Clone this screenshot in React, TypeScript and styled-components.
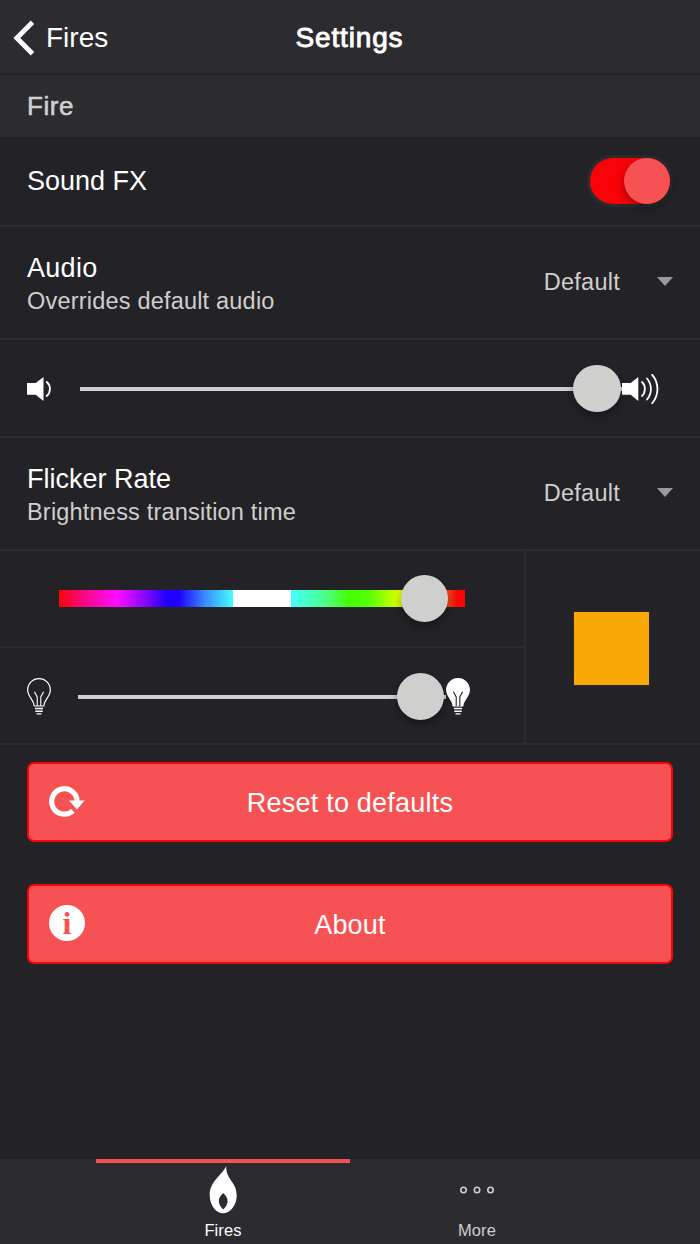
import React from "react";
import styled, { createGlobalStyle } from "styled-components";

const color = {
  page: "#232227",
  panel: "#2c2b30",
  line: "#2c2b30",
  text: "#fff",
  muted: "#cfcfcd",
  knob: "#cfcfcd",
  accent: "#f75253",
  accentStrong: "#f80308",
};

const GlobalStyle = createGlobalStyle`
  * { box-sizing: border-box; }
  body {
    margin: 0;
    background: ${color.page};
    color: ${color.text};
    font-family: "Liberation Sans", Arial, sans-serif;
  }
`;

const Screen = styled.div`
  display: flex;
  flex-direction: column;
  width: 700px;
  height: 1244px;
  background: ${color.page};
`;

const Header = styled.header`
  display: grid;
  grid-template-columns: 1fr auto 1fr;
  align-items: center;
  height: 75px;
  padding: 2px 14px 0 13px;
  background: ${color.panel};
  border-bottom: 2px solid #242328;
`;

const BackLink = styled.a`
  display: flex;
  align-items: center;
  gap: 11px;
  font-size: 28px;
  line-height: 34px;
`;

const Title = styled.h1`
  margin: 0;
  font-size: 28px;
  line-height: 34px;
  font-weight: 400;
  letter-spacing: 0.85px;
  -webkit-text-stroke: 0.9px ${color.text};
`;

const SectionHeading = styled.h2`
  display: flex;
  align-items: center;
  height: 62px;
  margin: 0;
  padding: 0 27px;
  background: ${color.panel};
  color: ${color.muted};
  font-size: 26px;
  font-weight: 400;
  letter-spacing: 0.6px;
  -webkit-text-stroke: 0.6px ${color.muted};
`;

const Row = styled.div<{ $height: number }>`
  display: flex;
  align-items: center;
  justify-content: space-between;
  height: ${(p) => p.$height}px;
  padding: 0 27px;
  border-bottom: 2px solid ${color.line};
`;

const Label = styled.div<{ $tracking?: number }>`
  font-size: 27px;
  line-height: 33px;
  letter-spacing: ${(p) => p.$tracking ?? 0}px;
`;

const Hint = styled.div`
  color: ${color.muted};
  font-size: 23.5px;
  line-height: 33px;
  letter-spacing: 0.2px;
`;

const LabelGroup = styled.div`
  padding-top: 5px;
`;

const Select = styled.div`
  display: flex;
  align-items: center;
  gap: 37px;
  color: ${color.muted};
  font-size: 23.5px;
  line-height: 33px;
  letter-spacing: 0.25px;
`;

const Caret = styled.span`
  margin-top: -3px;
  border: 8.5px solid transparent;
  border-top: 9px solid #9b9b9b;
  border-bottom: 0;
`;

const Toggle = styled.div`
  display: flex;
  justify-content: flex-end;
  width: 86px;
  height: 52px;
  margin-right: 0;
  border: 3px solid ${color.panel};
  border-radius: 26px;
  background: ${color.accentStrong};
`;

const ToggleKnob = styled.div`
  width: 46px;
  height: 46px;
  border-radius: 50%;
  background: ${color.accent};
  box-shadow: 0 4px 10px rgba(0, 0, 0, 0.35);
`;

const SliderRow = styled.div<{ $height: number; $padding: string; $last?: boolean }>`
  display: flex;
  align-items: center;
  height: ${(p) => p.$height}px;
  padding: ${(p) => p.$padding};
  border-bottom: ${(p) => (p.$last ? "0" : `2px solid ${color.line}`)};
`;

const Track = styled.div<{ $hue?: boolean }>`
  display: flex;
  align-items: center;
  flex: 1;
  height: ${(p) => (p.$hue ? 17 : 4)}px;
  background: ${(p) =>
    p.$hue
      ? `linear-gradient(90deg, #fa0505 0%, #f8077a 5.5%, #ff0dff 14.3%, #8a08ff 21%,
         #1f00ff 26.5%, #1f00ff 29.5%, #3a8cff 36%, #4ff 42.86%, #fff 42.86%, #fff 57.14%,
         #4ff 57.14%, #4dff8c 65.5%, #44ff00 71.4%, #50ff00 76%, #e8ff00 84.5%,
         #ffb000 89%, #f24716 96%, #fa0505 98%)`
      : color.knob};
`;

const Knob = styled.div`
  flex: none;
  width: 47.5px;
  height: 47.5px;
  margin-left: auto;
  border-radius: 50%;
  background: ${color.knob};
  box-shadow: 0 4px 9px rgba(0, 0, 0, 0.35);
`;

const LightPanel = styled.div`
  display: grid;
  grid-template-columns: 524px 1fr;
  height: 194px;
  border-bottom: 2px solid ${color.line};
`;

const SwatchCell = styled.div`
  display: flex;
  align-items: center;
  justify-content: center;
  padding-right: 3px;
  border-left: 2px solid ${color.line};
`;

const Swatch = styled.div`
  width: 75px;
  height: 73px;
  background: #faa805;
  box-shadow: 0 0 0 1px #292933;
`;

const Actions = styled.div`
  display: flex;
  flex-direction: column;
  flex: 1;
  gap: 42px;
  padding: 17px 27px 0;
`;

const ActionButton = styled.button`
  display: grid;
  grid-template-columns: 36px 1fr 36px;
  align-items: center;
  height: 80px;
  padding: 0 20px;
  border: 2px solid ${color.accentStrong};
  border-radius: 7px;
  background: ${color.accent};
  color: ${color.text};
  font: inherit;
  font-size: 27px;
  letter-spacing: 0.22px;
`;

const ButtonLabel = styled.span`
  padding-top: 2px;
`;

const InfoBadge = styled.span`
  display: block;
  width: 36px;
  height: 36px;
  margin-top: -2px;
  border-radius: 50%;
  background: #fff;
  color: ${color.accent};
  font-family: "Liberation Serif", serif;
  font-weight: 700;
  font-size: 32px;
  line-height: 37px;
  letter-spacing: 0;
  text-align: center;
`;

const TabBar = styled.nav`
  display: flex;
  justify-content: center;
  height: 85px;
  background: ${color.panel};
`;

const Tab = styled.div<{ $active?: boolean }>`
  display: flex;
  flex-direction: column;
  align-items: center;
  width: 254px;
  padding-top: 3px;
  border-top: 4px solid ${(p) => (p.$active ? color.accent : "transparent")};
  color: ${(p) => (p.$active ? color.text : color.muted)};
  font-size: 16.5px;
  line-height: 20px;
  letter-spacing: 0.1px;
`;

const TabIcon = styled.span`
  display: flex;
  align-items: center;
  height: 48px;
  margin-bottom: 6px;

  svg { display: block; }
`;

const ChevronIcon = () => (
  <svg width="22" height="36" viewBox="0 0 22 36" fill="none">
    <path d="M19.5 2.2 3.8 18l15.7 15.8" stroke="#fff" strokeWidth="4.8" />
  </svg>
);

const Speaker = "M0 8.5H8.7L16.5 3V26.6L8.7 20.5H0Z";

const VolumeLowIcon = () => (
  <svg width="26" height="30" viewBox="0 0 26 30" fill="none">
    <path d="M0 9H8.7L16.5 3V27L8.7 20.8H0Z" fill="#fff" />
    <path d="M19.7 8C24 11.5 24 18.5 19.7 22" stroke="#fff" strokeWidth="1.8" strokeLinecap="round" />
  </svg>
);

const VolumeHighIcon = () => (
  <svg width="38" height="30" viewBox="0 0 38 30" fill="none">
    <path d="M0 9H8.7L16.3 3V27L8.7 20.8H0Z" fill="#fff" />
    <g stroke="#fff" strokeWidth="1.8" strokeLinecap="round">
      <path d="M20 8C23.8 11.5 23.8 18.5 20 22" />
      <path d="M25 4.5C30.2 10.5 30.2 19.5 25 25.5" />
      <path d="M30.2 .8C37.2 9 37.2 21 30.2 29.2" />
    </g>
  </svg>
);

const BulbIcon = ({ lit = false }: { lit?: boolean }) => (
  <svg width="24" height="38" viewBox="0 0 24 38" fill="none">
    <path
      d="M7.2 28C7 21.5.7 19 .7 11.9A11.3 11.3 0 0 1 23.3 11.9C23.3 19 17 21.5 16.8 28Z"
      fill={lit ? "#fff" : "none"}
      stroke="#fff"
      strokeWidth="1.2"
    />
    <path
      d="M7.4 13.8 10.2 19V28M16.6 13.8 13.8 19V28"
      stroke={lit ? color.page : "#fff"}
      strokeWidth="1.1"
    />
    <path d="M8 30.5H16M8.3 33.2H15.7M9.5 35.9H14.5" stroke="#fff" strokeWidth="1.4" />
  </svg>
);

const ResetIcon = () => (
  <svg width="36" height="32" viewBox="0 0 36 32" fill="none">
    <path d="M23.9 24.9A12.7 12.7 0 1 1 28.1 15.5" stroke="#fff" strokeWidth="5.2" />
    <path d="M20 14.4H35.5L28 23.4Z" fill="#fff" />
  </svg>
);

const FlameIcon = () => (
  <svg width="28" height="48" viewBox="0 0 28 48">
    <path
      fill="#fff"
      fillRule="evenodd"
      d="M17.2 0C16.8 14 27.7 15.5 27.7 29.5C27.7 40 20.5 47.3 14.2 47.3C7.5 47.3.7 40 .7 29C.7 15 13 9.5 17.2 0ZM14.2 27Q5.4 35 14.2 43.6Q23 35 14.2 27Z"
    />
  </svg>
);

const MoreIcon = () => (
  <svg width="36" height="8" viewBox="0 0 36 8" fill="none" stroke={color.muted} strokeWidth="1.6">
    <circle cx="4.5" cy="4" r="2.7" />
    <circle cx="18" cy="4" r="2.7" />
    <circle cx="31.5" cy="4" r="2.7" />
  </svg>
);

const IconSlot = styled.span<{ $width: number; $top?: number }>`
  flex: none;
  width: ${(p) => p.$width}px;
  padding-top: ${(p) => p.$top ?? 0}px;

  svg { display: block; }
`;

const KnobOffset = styled.div<{ $right: number }>`
  display: flex;
  flex: 1;
  padding-right: ${(p) => p.$right}px;
`;

function SelectRow({ label, hint, tracking }: { label: string; hint: string; tracking?: number }) {
  return (
    <Row $height={tracking ? 113 : 113}>
      <LabelGroup>
        <Label $tracking={tracking}>{label}</Label>
        <Hint>{hint}</Hint>
      </LabelGroup>
      <Select>
        Default
        <Caret />
      </Select>
    </Row>
  );
}

function Slider({ right, hue }: { right: number; hue?: boolean }) {
  return (
    <Track $hue={hue}>
      <KnobOffset $right={right}>
        <Knob />
      </KnobOffset>
    </Track>
  );
}

export default function App() {
  return (
    <>
      <GlobalStyle />
      <Screen>
        <Header>
          <BackLink>
            <ChevronIcon />
            Fires
          </BackLink>
          <Title>Settings</Title>
        </Header>
        <SectionHeading>Fire</SectionHeading>
        <Row $height={90}>
          <Label>Sound FX</Label>
          <Toggle>
            <ToggleKnob />
          </Toggle>
        </Row>
        <SelectRow label="Audio" hint="Overrides default audio" tracking={0.3} />
        <SliderRow $height={98} $padding="1px 20px 0 27px">
          <IconSlot $width={52.5}>
            <VolumeLowIcon />
          </IconSlot>
          <Slider right={1.5} />
          <IconSlot $width={58}>
            <VolumeHighIcon />
          </IconSlot>
        </SliderRow>
        <SelectRow label="Flicker Rate" hint="Brightness transition time" />
        <LightPanel>
          <div>
            <SliderRow $height={97} $padding="0 59px 0 59px">
              <Slider hue right={17} />
            </SliderRow>
            <SliderRow $last $height={97} $padding="0 27px">
              <IconSlot $width={51}>
                <BulbIcon />
              </IconSlot>
              <Slider right={2} />
              <IconSlot $width={51}>
                <BulbIcon lit />
              </IconSlot>
            </SliderRow>
          </div>
          <SwatchCell>
            <Swatch />
          </SwatchCell>
        </LightPanel>
        <Actions>
          <ActionButton>
            <ResetIcon />
            <ButtonLabel>Reset to defaults</ButtonLabel>
          </ActionButton>
          <ActionButton>
            <InfoBadge>i</InfoBadge>
            <ButtonLabel>About</ButtonLabel>
          </ActionButton>
        </Actions>
        <TabBar>
          <Tab $active>
            <TabIcon>
              <FlameIcon />
            </TabIcon>
            Fires
          </Tab>
          <Tab>
            <TabIcon>
              <MoreIcon />
            </TabIcon>
            More
          </Tab>
        </TabBar>
      </Screen>
    </>
  );
}
